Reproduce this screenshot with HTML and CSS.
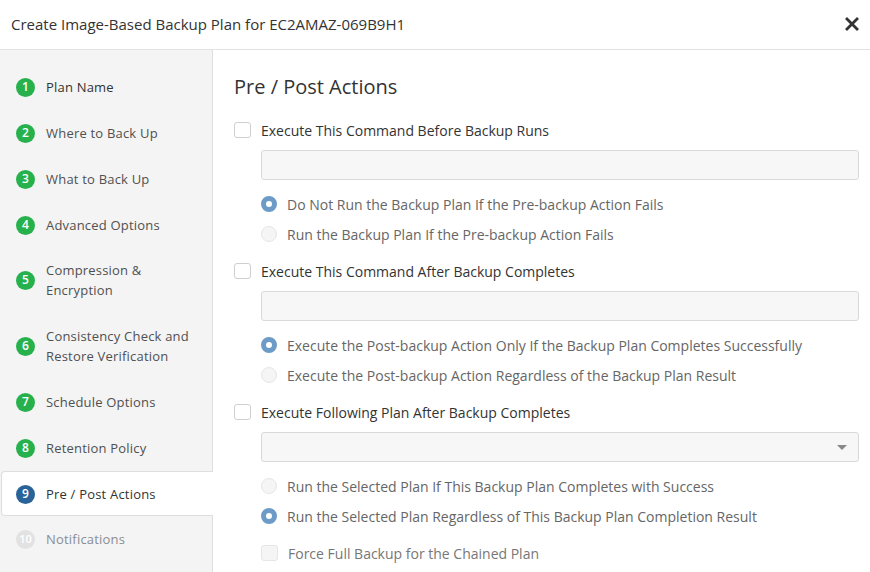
FILE: index.html
```html
<!DOCTYPE html>
<html lang="en">
<head>
  <meta charset="UTF-8">
  <meta name="viewport" content="width=device-width, initial-scale=1.0">
  <title>Create Image-Based Backup Plan</title>
  <link rel="stylesheet" href="styles.css">
</head>
<body>
  <div class="modal">
    <header class="modal-header">
      <h1>Create Image-Based Backup Plan for EC2AMAZ-069B9H1</h1>
      <button class="close-btn" aria-label="Close">
        <svg width="14" height="14" viewBox="0 0 14 14">
          <path d="M2 2 L12 12 M12 2 L2 12" stroke="#333" stroke-width="2.8" stroke-linecap="square"/>
        </svg>
      </button>
    </header>

    <div class="modal-body">
      <nav class="steps">
        <div class="step done first"><span class="num">1</span><span class="label">Plan Name</span></div>
        <div class="step done"><span class="num">2</span><span class="label">Where to Back Up</span></div>
        <div class="step done"><span class="num">3</span><span class="label">What to Back Up</span></div>
        <div class="step done"><span class="num">4</span><span class="label">Advanced Options</span></div>
        <div class="step done tight"><span class="num">5</span><span class="label">Compression &amp;<br>Encryption</span></div>
        <div class="step done"><span class="num">6</span><span class="label">Consistency Check and<br>Restore Verification</span></div>
        <div class="step done"><span class="num">7</span><span class="label">Schedule Options</span></div>
        <div class="step done"><span class="num">8</span><span class="label">Retention Policy</span></div>
        <div class="step active"><span class="num">9</span><span class="label">Pre / Post Actions</span></div>
        <div class="step todo"><span class="num">10</span><span class="label">Notifications</span></div>
      </nav>

      <main class="content">
        <h2>Pre / Post Actions</h2>

        <section class="action">
          <label class="check-row"><span class="box"></span>Execute This Command Before Backup Runs</label>
          <input type="text" class="field">
          <div class="radios">
            <label class="radio-row"><span class="radio on"></span>Do Not Run the Backup Plan If the Pre-backup Action Fails</label>
            <label class="radio-row"><span class="radio"></span>Run the Backup Plan If the Pre-backup Action Fails</label>
          </div>
        </section>

        <section class="action">
          <label class="check-row"><span class="box"></span>Execute This Command After Backup Completes</label>
          <input type="text" class="field">
          <div class="radios">
            <label class="radio-row"><span class="radio on"></span>Execute the Post-backup Action Only If the Backup Plan Completes Successfully</label>
            <label class="radio-row"><span class="radio"></span>Execute the Post-backup Action Regardless of the Backup Plan Result</label>
          </div>
        </section>

        <section class="action">
          <label class="check-row"><span class="box"></span>Execute Following Plan After Backup Completes</label>
          <div class="field select"><span class="caret"></span></div>
          <div class="radios">
            <label class="radio-row"><span class="radio"></span>Run the Selected Plan If This Backup Plan Completes with Success</label>
            <label class="radio-row"><span class="radio on"></span>Run the Selected Plan Regardless of This Backup Plan Completion Result</label>
          </div>
          <label class="check-row sub"><span class="box disabled"></span>Force Full Backup for the Chained Plan</label>
        </section>
      </main>
    </div>
  </div>
</body>
</html>
```

FILE: styles.css
```css
* {
  box-sizing: border-box;
}

body {
  margin: 0;
  font-family: 'Open Sans', 'Liberation Sans', sans-serif;
  color: #333;
  background: #fff;
  overflow: hidden;
}

.modal {
  width: 870px;
  height: 572px;
  display: flex;
  flex-direction: column;
}

.modal-header {
  height: 50px;
  flex-shrink: 0;
  display: flex;
  align-items: center;
  justify-content: space-between;
  padding: 0 11px 1px 11px;
  border-bottom: 1px solid #e2e2e2;
}

.modal-header h1 {
  margin: 0;
  font-size: 15px;
  font-weight: 400;
  color: #333;
}

.close-btn {
  border: none;
  background: none;
  padding: 0;
  width: 14px;
  height: 14px;
  cursor: pointer;
  display: flex;
}

.modal-body {
  flex: 1;
  display: flex;
  min-height: 0;
}

/* wizard steps */
.steps {
  width: 213px;
  flex-shrink: 0;
  background: #f4f4f4;
  border-right: 1px solid #dedede;
  padding-top: 14px;
}

.step {
  display: flex;
  align-items: center;
  padding: 13px 10px 13px 16px;
  font-size: 13px;
  line-height: 20px;
  letter-spacing: 0.2px;
  color: #505050;
}

.step.tight {
  padding-top: 12px;
}

.step.first .label {
  color: #333;
}

.step .num {
  width: 19px;
  height: 19px;
  border-radius: 50%;
  flex-shrink: 0;
  display: flex;
  align-items: center;
  justify-content: center;
  color: #fff;
  font-size: 12px;
  font-weight: 600;
  letter-spacing: 0;
  margin-right: 11px;
}

.step.done .num {
  background: #27b14d;
}

.step.active {
  background: #fff;
  border: 1px solid #dedede;
  border-right: none;
  border-radius: 4px 0 0 4px;
  margin: 0 -1px 0 1px;
  padding: 12px 10px 11px 14px;
  color: #333;
}

.step.active .num {
  background: #2a6399;
}

.step.todo {
  color: #8a8d92;
}

.step.todo .num {
  background: #e2e2e2;
  font-size: 11px;
}

/* content */
.content {
  flex: 1;
  padding: 25px 11px 0 21px;
}

.content h2 {
  margin: 0 0 21px;
  font-size: 20px;
  font-weight: 400;
  line-height: 24px;
  color: #333;
}

.action {
  margin-bottom: 12px;
}

.check-row {
  display: flex;
  align-items: center;
  height: 20px;
  font-size: 14px;
  color: #333;
}

.box {
  width: 17px;
  height: 16px;
  border: 1px solid #cfcfcf;
  border-radius: 3px;
  background: #fff;
  margin-right: 10px;
  flex-shrink: 0;
}

.box.disabled {
  background: #f5f5f5;
  border-color: #e6e6e6;
}

.field {
  display: block;
  width: 598px;
  height: 30px;
  margin: 10px 0 9px 27px;
  border: 1px solid #d9d9d9;
  border-radius: 3px;
  background: #f7f7f7;
  font-family: inherit;
}

.select {
  position: relative;
}

.caret {
  position: absolute;
  right: 11px;
  top: 12px;
  width: 0;
  height: 0;
  border-left: 5px solid transparent;
  border-right: 5px solid transparent;
  border-top: 5px solid #888;
}

.radios {
  padding-left: 27px;
}

.radio-row {
  display: flex;
  align-items: center;
  height: 30px;
  font-size: 14px;
  color: #666;
}

.radio {
  width: 16px;
  height: 16px;
  border-radius: 50%;
  border: 1px solid #e6e6e6;
  background: #f5f5f5;
  margin-right: 10px;
  flex-shrink: 0;
}

.radio.on {
  border: 5px solid #6c9bc7;
  background: #fff;
}

.check-row.sub {
  margin-top: 12px;
  padding-left: 27px;
  color: #777;
}
```
